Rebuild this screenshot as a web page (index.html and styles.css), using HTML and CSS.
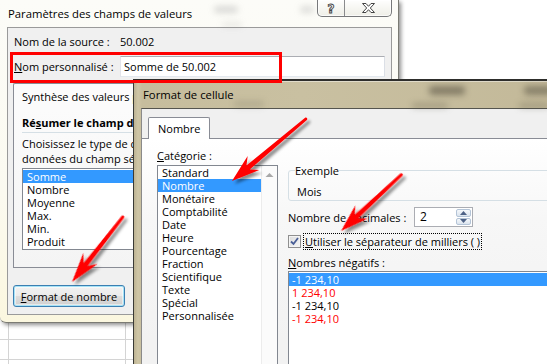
FILE: index.html
```html
<!DOCTYPE html>
<html lang="fr">
<head>
<meta charset="utf-8">
<title>Format de cellule</title>
<link rel="stylesheet" href="styles.css">
</head>
<body>
<div class="desk">
  <section class="win pvf">
    <header class="tbar">
      <span class="haze h1"></span><span class="haze h2"></span><span class="haze h3"></span>
      <span class="ttl">Paramètres des champs de valeurs</span>
      <div class="caps">
        <span class="cap help"><svg width="10" height="12" viewBox="0 0 10 12"><text x="5" y="10.5" text-anchor="middle" class="capq">?</text></svg></span>
        <span class="cap close"><svg width="13" height="10" viewBox="-0.5 -0.5 13 10"><path d="M0,0 H3.5 L6,2.8 L8.5,0 H12 L7.8,4.5 L12,9 H8.5 L6,6.2 L3.5,9 H0 L4.2,4.5 Z" fill="#fff" stroke="#444" stroke-width="1" stroke-linejoin="round"/></svg></span>
      </div>
    </header>
    <div class="client pclient">
      <div class="row src"><span class="lbl">Nom de la source :</span><span>50.002</span></div>
      <div class="row name"><span class="lbl"><u>N</u>om personnalisé :</span><span class="inp">Somme de 50.002</span></div>
      <div class="tabrow1"><span class="tab1">Synthèse des valeurs par</span></div>
      <div class="panel1">
        <div class="hdr">Ré<u>s</u>umer le champ de valeurs par</div>
        <p class="desc"><span>Choisissez le type de calcul que vous souhaitez utiliser pour synthétiser les</span><span>données du champ sélectionné</span></p>
        <ul class="lb sumlist">
          <li class="sel">Somme</li><li>Nombre</li><li>Moyenne</li><li>Max.</li><li>Min.</li><li>Produit</li>
        </ul>
      </div>
      <button class="btn"><u>F</u>ormat de nombre</button>
    </div>
  </section>

  <section class="win fc">
    <header class="fbar">
      <span class="haze f1"></span><span class="haze f2"></span><span class="haze f3"></span><span class="haze f4"></span><span class="haze f5"></span>
      <span class="ttl">Format de cellule</span>
    </header>
    <div class="client fclient">
      <div class="tabrow"><span class="tab">Nombre</span></div>
      <div class="panel">
        <div class="catcol">
          <div class="lab"><u>C</u>atégorie :</div>
          <div class="lb catlist">
            <ul>
              <li>Standard</li><li class="sel">Nombre</li><li>Monétaire</li><li>Comptabilité</li><li>Date</li><li>Heure</li><li>Pourcentage</li><li>Fraction</li><li>Scientifique</li><li>Texte</li><li>Spécial</li><li>Personnalisée</li>
            </ul>
            <div class="vscroll"><svg width="9" height="6" viewBox="0 0 9 6"><path d="M0.5,5 L4.5,1 L8.5,5 Z" fill="#a8a8a8"/></svg></div>
          </div>
        </div>
        <div class="opts">
          <fieldset class="grp"><legend>Exemple</legend><div class="sample">Mois</div></fieldset>
          <div class="dec">
            <span class="declbl">Nombre de décimales :</span>
            <span class="spin">
              <span class="spinval">2</span>
              <span class="spinbtns">
                <span class="sb"><svg width="7" height="4" viewBox="0 0 7 4"><path d="M0,4 L3.5,0 L7,4 Z" fill="#4d6185"/></svg></span>
                <span class="sb"><svg width="7" height="4" viewBox="0 0 7 4"><path d="M0,0 L3.5,4 L7,0 Z" fill="#4d6185"/></svg></span>
              </span>
            </span>
          </div>
          <div class="chk">
            <span class="box"><svg width="9" height="9" viewBox="0 0 9 9"><path d="M1,4.5 L3.5,7 L8,1" fill="none" stroke="#4a5f97" stroke-width="1.8"/></svg></span>
            <span class="chklbl"><u>U</u>tiliser le séparateur de milliers ( )</span>
          </div>
          <div class="lab negl"><u>N</u>ombres négatifs :</div>
          <ul class="lb neg">
            <li class="sel">-1 234,10</li><li class="red">1 234,10</li><li>-1 234,10</li><li class="red">-1 234,10</li>
          </ul>
        </div>
      </div>
    </div>
  </section>

  <div class="redbox"></div>

  <svg class="arrows" width="547" height="364" viewBox="0 0 547 364">
    <defs>
      <filter id="sh" x="-20%" y="-20%" width="150%" height="150%">
        <feDropShadow dx="3" dy="3" stdDeviation="1.6" flood-color="#000" flood-opacity="0.45"/>
      </filter>
    </defs>
    <g fill="#f00" filter="url(#sh)">
      <path transform="translate(232,181) rotate(140)" d="M0,0 L-28,-9 L-21,-2.5 L-97,-1.4 Q-99,0 -97,1.4 L-21,2.5 L-28,9 Z"/>
      <path transform="translate(341,231) rotate(137)" d="M0,0 L-28,-9 L-21,-2.5 L-83,-1.4 Q-85,0 -83,1.4 L-21,2.5 L-28,9 Z"/>
      <path transform="translate(72,282) rotate(128)" d="M0,0 L-30,-9 L-22,-2.5 L-83,-1.4 Q-85,0 -83,1.4 L-22,2.5 L-30,9 Z"/>
    </g>
  </svg>
</div>
</body>
</html>
```

FILE: styles.css
```css
* { box-sizing: border-box; }
html, body { margin: 0; padding: 0; }
body {
  width: 547px;
  height: 364px;
  overflow: hidden;
  background: #fff;
  font-family: "Open Sans", "Noto Sans", sans-serif;
  font-size: 11px;
  color: #000;
}
u { text-decoration: underline; text-underline-offset: 1px; }

.desk {
  position: relative;
  width: 547px;
  height: 364px;
  overflow: hidden;
  background-color: #fff;
  background-image:
    linear-gradient(90deg, transparent 8px, #d4d4d4 8px, #d4d4d4 9px, transparent 9px),
    linear-gradient(90deg, transparent 125px, #d4d4d4 125px, #d4d4d4 126px, transparent 126px),
    repeating-linear-gradient(180deg, transparent 0, transparent 19px, #d4d4d4 19px, #d4d4d4 20px);
  background-position: 0 322px, 0 322px, 0 320px;
  background-repeat: no-repeat, no-repeat, repeat-x;
  background-size: 140px 42px, 140px 42px, 140px 44px;
}

.win { position: absolute; }

/* ---------- Paramètres des champs de valeurs ---------- */
.pvf {
  z-index: 1;
  left: 0;
  top: 0;
  width: 399px;
  height: 323px;
  background: linear-gradient(180deg, #fcfcf8 0%, #fbfaf0 60%, #fbf7df 100%);
  border-right: 1px solid #7b7b74;
  border-bottom: 1px solid #7b7b74;
  border-radius: 0 0 6px 6px;
  box-shadow: 2px 2px 4px rgba(0, 0, 0, 0.45);
}
.tbar {
  position: relative;
  height: 27px;
  display: flex;
  align-items: flex-start;
}
.ttl {
  position: relative;
  padding-left: 8px;
  line-height: 27px;
  font-size: 11.3px;
  white-space: nowrap;
}
.haze {
  position: absolute;
  border-radius: 4px;
  filter: blur(3px);
}
.h1 { left: 214px; top: 6px; width: 24px; height: 7px; background: rgba(120, 120, 120, 0.25); }
.h2 { left: 300px; top: 6px; width: 14px; height: 7px; background: rgba(120, 120, 120, 0.22); }
.h3 { left: 222px; top: 22px; width: 20px; height: 5px; background: rgba(120, 120, 120, 0.14); }

.caps {
  position: relative;
  margin-left: auto;
  margin-right: 6px;
  display: flex;
  height: 17px;
  border: 1px solid #77787a;
  border-top: none;
  border-radius: 0 0 5px 5px;
  background: linear-gradient(180deg, rgba(255,255,255,0.85), rgba(236,236,228,0.85));
  box-shadow: inset 0 0 0 1px rgba(255,255,255,0.7);
}
.cap {
  display: flex;
  align-items: center;
  justify-content: center;
}
.help { width: 27px; border-right: 1px solid #8a8b8d; }
.close { width: 46px; }
.capq {
  font-family: "DejaVu Sans", sans-serif;
  font-weight: bold;
  font-size: 12px;
  fill: #fff;
  stroke: #444;
  stroke-width: 0.9px;
}

.client {
  background: #f0f0f0;
}
.pclient {
  margin-left: 7px;
  width: 385px;
  height: 288px;
  border: 1px solid #9a9a9a;
  padding: 0 6px 0 5px;
}
.row {
  display: flex;
  align-items: center;
}
.src { height: 15px; margin-top: 6px; }
.name { height: 21px; margin-top: 7px; }
.lbl { width: 107px; padding-left: 1px; white-space: nowrap; }
.inp {
  flex: 1;
  height: 21px;
  background: #fff;
  border: 1px solid #abadb3;
  border-color: #abadb3 #dbdfe6 #e3e9ef #e2e3ea;
  padding-left: 3px;
  line-height: 19px;
}
.tabrow1 {
  margin-top: 6px;
  height: 25px;
  display: flex;
}
.tab1 {
  width: 121px;
  height: 26px;
  overflow: hidden;
  border: 1px solid #898c95;
  border-right: none;
  border-bottom: none;
  border-radius: 2px 0 0 0;
  background: #fbfbfb;
  padding-left: 8px;
  line-height: 26px;
  white-space: nowrap;
  position: relative;
  z-index: 1;
}
.panel1 {
  height: 160px;
  border: 1px solid #898c95;
  background: linear-gradient(180deg, #fbfbfb, #f4f4f4);
  padding: 0 8px;
}
.hdr {
  width: 111px;
  overflow: hidden;
  margin-top: 6px;
  line-height: 15px;
  font-weight: bold;
  white-space: nowrap;
  padding-bottom: 2px;
  border-bottom: 1px solid #d5dfe5;
}
.desc {
  width: 111px;
  overflow: hidden;
  margin: 3px 0 0;
  line-height: 15px;
}
.desc span { display: block; white-space: nowrap; }

.lb {
  list-style: none;
  margin: 0;
  padding: 0;
  background: #fff;
  border: 1px solid #828790;
}
.lb li {
  height: 13px;
  line-height: 13px;
  padding-left: 4px;
  white-space: nowrap;
}
.lb li.sel { background: #3399ff; color: #fff; }
.sumlist {
  width: 111px;
  overflow: hidden;
  border-right: none;
  margin-top: 2px;
  height: 82px;
  padding-top: 1px;
}
.sumlist li { padding-left: 4px; }

.btn {
  display: block;
  margin-top: 17px;
  width: 112px;
  height: 22px;
  padding: 0;
  font: inherit;
  color: #000;
  border: 1px solid #3c7fb1;
  border-radius: 3px;
  background: linear-gradient(180deg, #f2f2f2 0%, #ebebeb 48%, #dddddd 52%, #cfcfcf 100%);
  box-shadow: inset 0 0 0 1px #a6e3f7, inset 0 0 0 2px rgba(255,255,255,0.5);
}

/* ---------- Format de cellule ---------- */
.fc {
  z-index: 2;
  left: 133px;
  top: 79px;
  width: 420px;
  height: 290px;
  border-top: 2px solid #2e2e2c;
  border-left: 1px solid #3a3a36;
  background: linear-gradient(90deg, #bdb393 0, #cfc6a6 4px, #c6bd9d 8px, #c9c0a1 40%, #c3b999 100%);
}
.fbar {
  position: relative;
  height: 27px;
  box-shadow: inset 0 1px 0 rgba(255,255,255,0.45);
}
.fbar .ttl { padding-left: 9px; }
.f1 { left: 295px; top: 5px; width: 36px; height: 9px; background: rgba(80, 75, 60, 0.55); }
.f2 { left: 390px; top: 5px; width: 30px; height: 9px; background: rgba(80, 75, 60, 0.5); }
.f3 { left: 278px; top: 22px; width: 36px; height: 5px; background: rgba(80, 75, 60, 0.3); }
.f4 { left: 385px; top: 22px; width: 30px; height: 5px; background: rgba(80, 75, 60, 0.3); }
.f5 { left: 100px; top: 20px; width: 30px; height: 6px; background: rgba(80, 75, 60, 0.18); }

.fclient {
  margin-left: 7px;
  height: 270px;
  border-top: 1px solid #55554f;
  border-left: 1px solid #8a8a8a;
}
.tabrow {
  height: 29px;
  padding: 8px 0 0 6px;
  display: flex;
}
.tab {
  position: relative;
  z-index: 1;
  width: 62px;
  height: 22px;
  margin-bottom: -1px;
  border: 1px solid #898c95;
  border-bottom: none;
  border-radius: 2px 2px 0 0;
  background: #fff;
  padding-left: 9px;
  line-height: 21px;
}
.panel {
  height: 240px;
  border-top: 1px solid #898c95;
  background: linear-gradient(180deg, #ffffff 0, #f7f7f7 80px, #f2f2f2 200px);
  display: flex;
  gap: 10px;
  padding-left: 15px;
}
.catcol {
  width: 121px;
  flex: none;
}
.lab {
  line-height: 15px;
  white-space: nowrap;
}
.catcol .lab { margin-top: 9px; }
.catlist {
  margin-top: 2px;
  height: 220px;
  display: flex;
}
.catlist ul {
  flex: 1;
  list-style: none;
  margin: 0;
  padding: 0;
}
.catlist li { padding-left: 4px; }
.vscroll {
  width: 16px;
  flex: none;
  border-left: 1px solid #ececec;
  background: #fbfbfb;
  display: flex;
  justify-content: center;
  padding-top: 6px;
}

.opts {
  flex: 1;
  margin-top: 24px;
  display: flex;
  flex-direction: column;
}
.grp {
  margin: 0;
  padding: 0 6px 1px;
  border: 1px solid #d5dfe5;
  border-radius: 3px;
  min-width: 0;
}
.grp legend {
  padding: 0;
  line-height: 15px;
}
.sample {
  margin-top: 6px;
  padding-left: 2px;
  line-height: 15px;
}
.dec {
  margin-top: 6px;
  height: 20px;
  display: flex;
  align-items: center;
}
.declbl { width: 126px; white-space: nowrap; }
.spin {
  display: flex;
  height: 20px;
  border: 1px solid #abadb3;
  background: #fff;
}
.spinval {
  width: 40px;
  padding-left: 5px;
  line-height: 18px;
  font-size: 12px;
}
.spinbtns {
  width: 17px;
  display: flex;
  flex-direction: column;
  padding: 1px;
  gap: 1px;
}
.sb {
  flex: 1;
  display: flex;
  align-items: center;
  justify-content: center;
  border: 1px solid #b4c4d7;
  border-radius: 2px;
  background: linear-gradient(180deg, #f5f8fb, #dbe4ee);
}
.chk {
  margin-top: 6px;
  height: 17px;
  display: flex;
  align-items: center;
}
.box {
  width: 13px;
  height: 13px;
  border: 1px solid #8f8f8f;
  background: linear-gradient(135deg, #dcdcdc, #f6f6f6);
  display: flex;
  align-items: center;
  justify-content: center;
  box-shadow: inset 0 0 0 1px #f4f4f4;
}
.chklbl {
  margin-left: 2px;
  height: 17px;
  line-height: 15px;
  padding: 0 1px;
  border: 1px dotted #000;
  white-space: nowrap;
}
.negl { margin-top: 5px; }
.neg {
  margin-top: 1px;
  height: 120px;
  padding-top: 1px;
}
.neg li { padding-left: 3px; }
.neg li.red { color: #f00; }

/* ---------- annotations ---------- */
.redbox {
  position: absolute;
  z-index: 3;
  left: 10px;
  top: 52px;
  width: 272px;
  height: 31px;
  border: 3px solid #f00;
}
.arrows {
  position: absolute;
  z-index: 4;
  left: 0;
  top: 0;
  pointer-events: none;
}
```
